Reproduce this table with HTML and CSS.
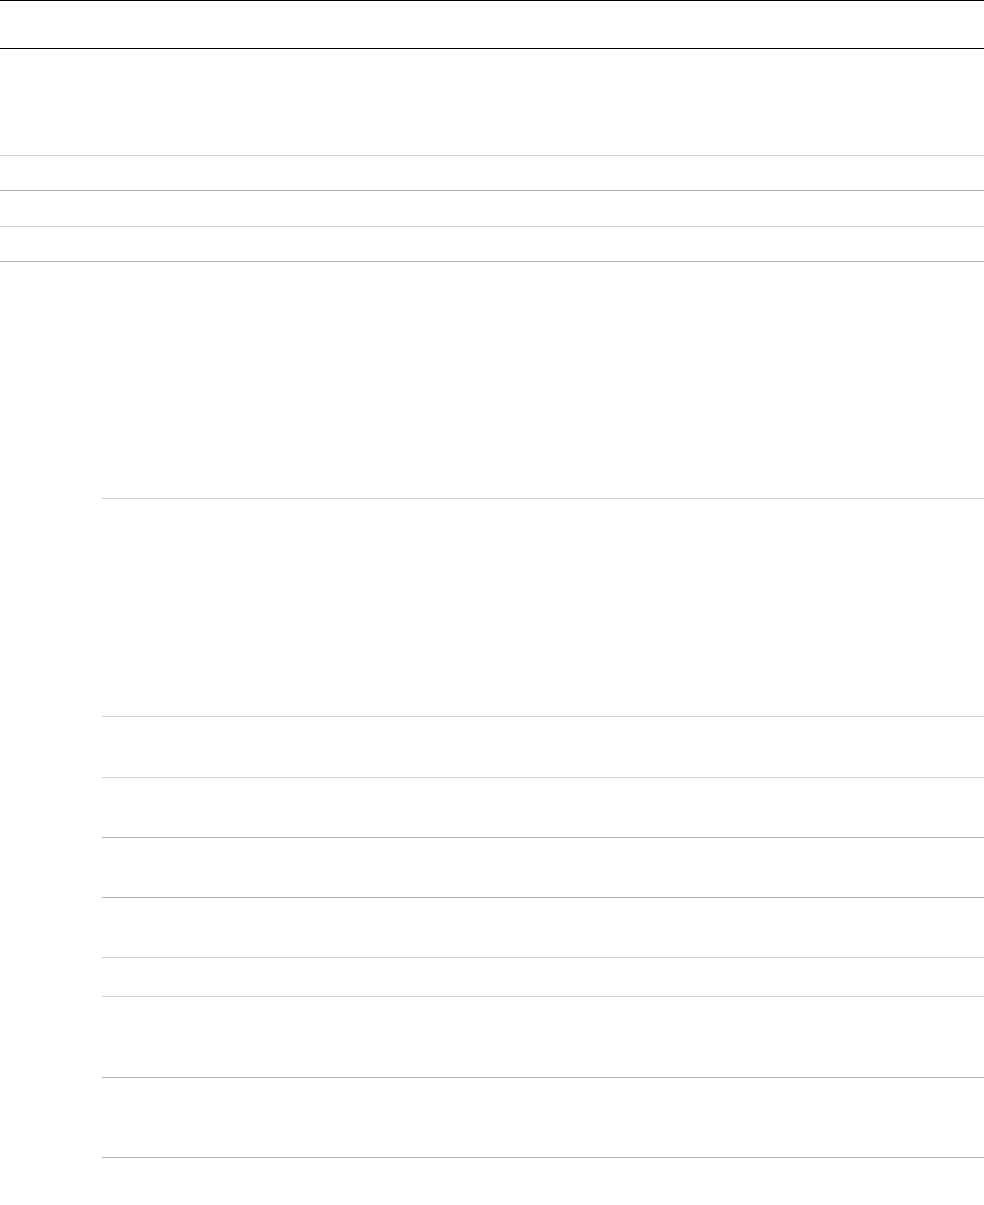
FILE: index.html
```html
<html lang="en">
<head>
    <meta charset="UTF-8">
    <meta name="viewport" content="width=device-width, initial-scale=1.0">
    <title>Page</title>
    <link rel="stylesheet" href="styles.css">
</head>
<body>

<header class="topbar"></header>

<div class="table">
    <div class="table-row light"></div>
    <div class="table-row dark"></div>
    <div class="table-row light"></div>
    <div class="table-row dark"></div>
</div>

<div class="list">
    <div class="item start light"></div>
    <div class="item big light"></div>
    <div class="item light"></div>
    <div class="item dark"></div>
    <div class="item dark"></div>
    <div class="item small light"></div>
    <div class="item tall light"></div>
    <div class="item taller dark"></div>
    <div class="item end dark"></div>
</div>

</body>
</html>
```

FILE: styles.css
```css
body {
    margin: 0;
    padding: 0;
    background: #fff;
    font-family: "Liberation Sans", Arial, sans-serif;
}
.topbar {
    height: 47px;
    border-top: 1px solid #000;
    border-bottom: 1px solid #000;
}
.table {
    margin-top: 106px;
}
.table-row {
    height: 34px;
    border-top: 1px solid #b3b3b3;
}
.table-row:nth-child(2) {
    height: 35px;
}
.table-row:last-child {
    height: 0;
}
.list {
    margin-left: 102px;
    margin-top: 236px;
}
.item {
    height: 59px;
    border-top: 1px solid #b3b3b3;
}
.item.start {
    height: 217px;
}
.item.big {
    height: 60px;
}
.item.small {
    height: 38px;
}
.item.tall {
    height: 80px;
}
.item.taller {
    height: 79px;
}
.item.end {
    height: 0;
}
.light {
    border-top-color: #d2d2d2;
}
.dark {
    border-top-color: #b3b3b3;
}
```
